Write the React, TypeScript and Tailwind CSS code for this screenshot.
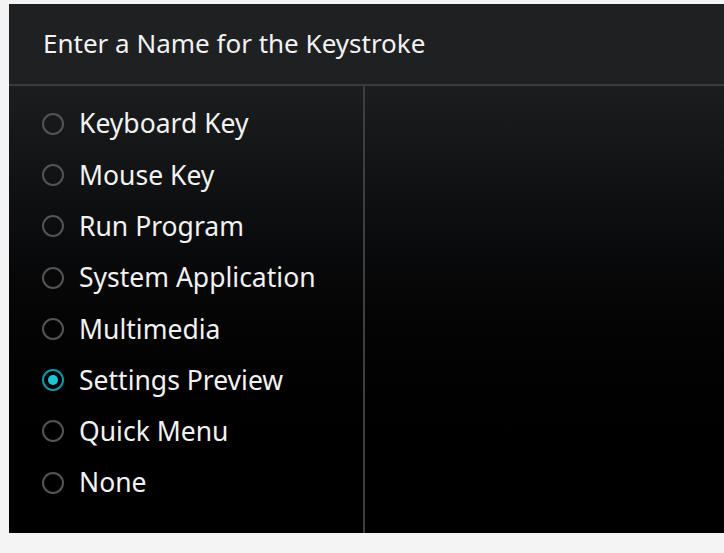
import React from "react";

const items = [
  "Keyboard Key",
  "Mouse Key",
  "Run Program",
  "System Application",
  "Multimedia",
  "Settings Preview",
  "Quick Menu",
  "None",
];

export default function App() {
  const selected = "Settings Preview";
  return (
    <div
      className="w-[724px] h-[553px] bg-[#f4f4f4] pt-[4px] pl-[9px] pb-[20px] overflow-hidden"
      style={{ fontFamily: '"Noto Sans", "Open Sans", sans-serif' }}
    >
      <div className="w-full h-full flex flex-col bg-[#1f2022]">
        <div className="h-[82px] flex items-center pl-[34px] pb-[2px] text-[26px] text-[#f2f2f2] border-b-2 border-[#3a3b3d] shrink-0">
          Enter a Name for the Keystroke
        </div>
        <div className="flex-1 flex bg-gradient-to-b from-[#1c1d1f] to-[#000000]">
          <div className="w-[356px] border-r-2 border-[#3d3e40] pt-[12px] shrink-0">
            {items.map((it) => {
              const on = it === selected;
              return (
                <div key={it} className="h-[51.3px] flex items-center pl-[33px] gap-[15px]">
                  <span
                    className={
                      "w-[22px] h-[22px] rounded-full border-2 flex items-center justify-center shrink-0 " +
                      (on ? "border-[#1696a6]" : "border-[#535456]")
                    }
                  >
                    {on && <span className="w-[10px] h-[10px] rounded-full bg-[#1cc6d6]" />}
                  </span>
                  <span className="text-[26.5px] text-[#f2f2f2] leading-none">{it}</span>
                </div>
              );
            })}
          </div>
          <div className="flex-1" />
        </div>
      </div>
    </div>
  );
}
